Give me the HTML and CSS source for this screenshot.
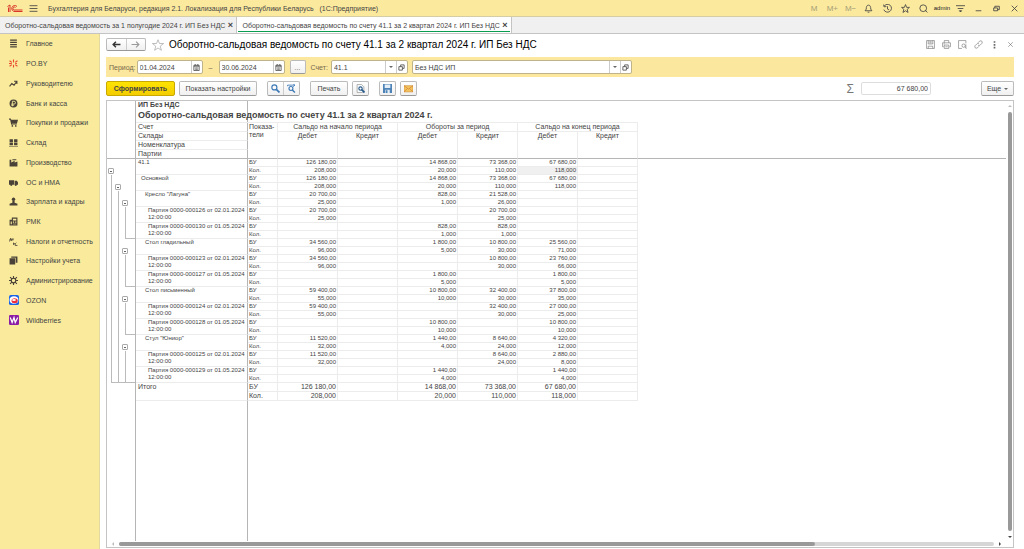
FILE: index.html
```html
<!DOCTYPE html>
<html lang="ru">
<head>
    <meta charset="UTF-8">
    <meta name="viewport" content="width=device-width, initial-scale=1.0">
    <title>Оборотно-сальдовая ведомость по счету 41.1</title>
    <link rel="stylesheet" href="styles.css">
</head>
<body>
    <!-- Title bar -->
    <header class="topbar">
        <svg class="logo" viewBox="0 0 32 18"><g fill="none" stroke="#d9352b" stroke-width="2"><path d="M1 5l5-3v14M3 7v9"/><path d="M20 5a6 6 0 1 0-4 10h15"/><path d="M17 7a3 3 0 1 0-1 5h15"/></g></svg>
        <button class="icon-btn menu-btn" aria-label="Меню"><svg viewBox="0 0 16 16"><path d="M1 3h14M1 8h14M1 13h14"/></svg></button>
        <span class="app-name">Бухгалтерия для Беларуси, редакция 2.1. Локализация для Республики Беларусь &nbsp; (1С:Предприятие)</span>
        <div class="top-tools">
            <button class="mem">M</button>
            <button class="mem">M+</button>
            <button class="mem">M−</button>
            <button aria-label="Уведомления"><svg viewBox="0 0 16 16"><path d="M2 12h12l-2-3c0-4-1-7-4-7s-4 3-4 7zM6.500 14.500h3"/></svg></button>
            <button aria-label="История"><svg viewBox="0 0 16 16"><path d="M2 4a7 7 0 1 1-.5 6M1 1l1 4 4-.5M8 4v5l3 1.500"/></svg></button>
            <button aria-label="Избранное"><svg viewBox="0 0 16 16"><path d="M8 1l2 5h5l-4 3.500 1.500 5.500L8 12l-4.500 3L5 9.500 1 6h5z"/></svg></button>
            <button aria-label="Поиск"><svg viewBox="0 0 16 16"><circle cx="7.500" cy="7.500" r="6"/><path d="M11 11l4 4"/></svg></button>
            <button class="user">admin</button>
            <button aria-label="Настройки"><svg viewBox="0 0 16 16"><path d="M0 3h16M3 8h10"/><path class="solid" d="M6 12h4l-2 2z"/></svg></button>
            <button aria-label="Свернуть"><svg viewBox="0 0 16 16"><path d="M3 12h10"/></svg></button>
            <button aria-label="Восстановить"><svg viewBox="0 0 16 16"><path d="M3 7h7v5H3zM5 7V4h8v6h-3"/></svg></button>
            <button aria-label="Закрыть"><svg viewBox="0 0 16 16"><path d="M3 3l10 10M13 3L3 13"/></svg></button>
        </div>
    </header>

    <!-- Open windows -->
    <nav class="tabs">
        <div class="tab"><a href="#">Оборотно-сальдовая ведомость за 1 полугодие 2024 г. ИП Без НДС</a><button aria-label="Закрыть вкладку">×</button></div>
        <div class="tab active"><a href="#">Оборотно-сальдовая ведомость по счету 41.1 за 2 квартал 2024 г. ИП Без НДС</a><button aria-label="Закрыть вкладку">×</button></div>
    </nav>

    <div class="workspace">
        <nav class="sidebar">
            <div class="menu">
                <a href="#"><svg viewBox="0 0 16 16"><path d="M2 2h12M2 6h12M2 10h12M2 14h12" stroke="#4a4238" stroke-width="2"/></svg>Главное</a>
                <a href="#"><svg viewBox="0 0 16 16"><path d="M8 1v5M8 10v5M1 3l4 3M1 13l4-3M15 3l-4 3M15 13l-4-3M0 8h5M11 8h3" stroke="#ea4a30" stroke-width="2"/></svg>PO.BY</a>
                <a href="#"><svg viewBox="0 0 16 16"><path d="M1 13l4-5 4 3 5-7M9 4h5v5" fill="none" stroke="#4a4238" stroke-width="2"/></svg>Руководителю</a>
                <a href="#"><svg viewBox="0 0 16 16"><circle cx="8" cy="8" r="7"/><path d="M6 13V4h3a2 2 0 0 1 0 5H4M4 11h5" fill="none" stroke="#f9eb9b" stroke-width="1.500"/></svg>Банк и касса</a>
                <a href="#"><svg viewBox="0 0 16 16"><path d="M0 1h3l1 2h12l-2 7H5l1 1h8v1H4L2 3H0z"/><circle cx="6" cy="14" r="1.500"/><circle cx="12" cy="14" r="1.500"/></svg>Покупки и продажи</a>
                <a href="#"><svg viewBox="0 0 16 16"><path d="M1 2h6v5H1zM9 2h6v5H9zM1 8h6v5H1zM9 8h6v5H9zM0 14h16v1H0z"/></svg>Склад</a>
                <a href="#"><svg viewBox="0 0 16 16"><path d="M1 15V3h3v5l6-3v3l5-2v9zM6 2h7v2H6z"/></svg>Производство</a>
                <a href="#"><svg viewBox="0 0 16 16"><path d="M0 4h9v8H0zM10 5h4l2 3v4h-6z"/><circle cx="4" cy="12" r="2"/><circle cx="12" cy="12" r="2"/></svg>ОС и НМА</a>
                <a href="#"><svg viewBox="0 0 16 16"><circle cx="8" cy="4" r="3"/><path d="M6 6h4v4l5 2v3H1v-3l5-2z"/></svg>Зарплата и кадры</a>
                <a href="#"><svg viewBox="0 0 16 16"><path d="M1 5h4V1h10v14H1zM7 3v3h6V3zM3 8v5h2V8zM7 8v2h2V8zM11 8v2h2V8zM7 12v1h6v-1z" fill-rule="evenodd"/></svg>РМК</a>
                <a href="#"><svg viewBox="0 0 16 16"><path d="M1 8l2-6 2 5M1 5h7M7 2v3M8 10v4M8 12h3l2-2M11 12v3h4" fill="none" stroke="#4a4238" stroke-width="1.500"/></svg>Налоги и отчетность</a>
                <a href="#"><svg viewBox="0 0 16 16"><path d="M1 4h10v11H1zM4 1h11v11h-3V3H4z"/></svg>Настройки учета</a>
                <a href="#"><svg viewBox="0 0 16 16"><circle cx="8" cy="8" r="4" fill="none" stroke="#4a4238" stroke-width="2"/><path d="M8 0v4M8 12v4M0 8h4M12 8h4M2 2l3 3M11 11l3 3M14 2l-3 3M5 11l-3 3" stroke="#4a4238" stroke-width="2"/></svg>Администрирование</a>
                <a href="#"><svg class="brand" viewBox="0 0 16 16"><rect width="16" height="16" rx="3" fill="#1762e8"/><ellipse cx="8" cy="8" rx="7" ry="6" fill="#fff"/><ellipse cx="9" cy="9" rx="5" ry="4" fill="#ec2e3c"/><ellipse cx="8" cy="8" rx="3" ry="1.500" fill="#fff"/></svg>OZON</a>
                <a href="#"><svg class="brand" viewBox="0 0 16 16"><rect width="16" height="16" rx="2" fill="#8a1ca5"/><path d="M2 4l3 8 3-8 2 8 4-8" fill="none" stroke="#fff" stroke-width="2"/></svg>Wildberries</a>
            </div>
        </nav>

        <main class="page">
            <div class="page-head">
                <div class="btn-pair nav-pair">
                    <button aria-label="Назад"><svg viewBox="0 0 16 16"><path d="M15 8H3M7 3L2 8l5 5" fill="none" stroke="#333" stroke-width="2.500"/></svg></button>
                    <button aria-label="Вперед"><svg viewBox="0 0 16 16"><path d="M1 8h12M9 3l5 5-5 5" fill="none" stroke="#999" stroke-width="2"/></svg></button>
                </div>
                <button class="star" aria-label="В избранное"><svg viewBox="0 0 16 16"><path d="M8 1l2 5h5.500l-4.500 3.500 1.500 5.500L8 12l-4.500 3L5 9.500.5 6H6z" fill="none" stroke="#aaa"/></svg></button>
                <h1>Оборотно-сальдовая ведомость по счету 41.1 за 2 квартал 2024 г. ИП Без НДС</h1>
                <div class="head-tools">
                    <button aria-label="Сохранить"><svg viewBox="0 0 16 16"><path d="M1 1h14v14H1zM4 1v6h8V1M4 15v-4h8v4M6 3h4M6 5h4"/></svg></button>
                    <button aria-label="Печать"><svg viewBox="0 0 16 16"><path d="M4 5V1h8v4M3 12H1V5h14v7h-2M4 9h8v6H4zM6 12h4M3 7h2"/></svg></button>
                    <button aria-label="Просмотр"><svg viewBox="0 0 16 16"><path d="M7 15H1V1h13v5M15 15l-2-2M14 8v7"/><circle cx="10" cy="10" r="3"/></svg></button>
                    <button aria-label="Ссылка"><svg viewBox="0 0 16 16"><path d="M7 5l3-3c3-2 6 1 4 4l-3 3c-1 1-3 1-4 0M9 11l-3 3c-3 2-6-1-4-4l3-3c1-1 3-1 4 0"/></svg></button>
                    <button aria-label="Еще действия"><svg viewBox="0 0 16 16"><path d="M8 2v3M8 7v3M8 12v3" stroke-width="3"/></svg></button>
                    <button aria-label="Закрыть"><svg viewBox="0 0 16 16"><path d="M4 4l8 8M12 4l-8 8"/></svg></button>
                </div>
            </div>

            <form class="filter">
                <label for="date-from">Период:</label>
                <div class="field date"><input id="date-from" type="text" value="01.04.2024"><button type="button" aria-label="Календарь"><svg viewBox="0 0 16 16"><path d="M2 3h12v12H2zM2 5h12M5 0v3M11 0v3M5 9h6M5 12h6"/></svg></button></div>
                <label class="dash" for="date-to">–</label>
                <div class="field date"><input id="date-to" type="text" value="30.06.2024"><button type="button" aria-label="Календарь"><svg viewBox="0 0 16 16"><path d="M2 3h12v12H2zM2 5h12M5 0v3M11 0v3M5 9h6M5 12h6"/></svg></button></div>
                <button type="button" class="btn dots">...</button>
                <label for="account">Счет:</label>
                <div class="field account"><input id="account" type="text" value="41.1"><button type="button" aria-label="Выбрать"><i class="caret"></i></button><button type="button" aria-label="Открыть"><svg viewBox="0 0 16 16"><path d="M2 6h8v8H2zM6 6V2h8v8h-4"/></svg></button></div>
                <div class="field org"><input type="text" aria-label="Организация" value="Без НДС ИП"><button type="button" aria-label="Выбрать"><i class="caret"></i></button><button type="button" aria-label="Открыть"><svg viewBox="0 0 16 16"><path d="M2 6h8v8H2zM6 6V2h8v8h-4"/></svg></button></div>
            </form>

            <div class="toolbar">
                <button class="btn primary">Сформировать</button>
                <button class="btn settings">Показать настройки</button>
                <div class="btn-pair search-pair">
                    <button aria-label="Найти"><svg viewBox="0 0 16 16"><circle cx="6" cy="6" r="4.500" fill="none" stroke="#3b78b5" stroke-width="2"/><path d="M9.500 9.500L15 15" stroke="#3b78b5" stroke-width="3"/></svg></button>
                    <button aria-label="Искать дальше"><svg viewBox="0 0 16 16"><path d="M1 4V2h13M11 0l3 2-3 3" fill="none" stroke="#3b78b5" stroke-width="1.500"/><circle cx="7" cy="8" r="3.500" fill="none" stroke="#3b78b5" stroke-width="2"/><path d="M9.500 10.500L14 15" stroke="#3b78b5" stroke-width="2.500"/></svg></button>
                </div>
                <button class="btn print">Печать</button>
                <button class="btn icon" aria-label="Предпросмотр"><svg viewBox="0 0 16 16"><path d="M2 1h8l4 4v10H2z" fill="#fff" stroke="#777"/><circle cx="8" cy="8" r="3" fill="none" stroke="#265a8c" stroke-width="2"/><path d="M10 10l5 5" stroke="#265a8c" stroke-width="3"/></svg></button>
                <button class="btn icon save" aria-label="Сохранить"><svg viewBox="0 0 16 16"><path d="M0 0h16v16H0z" fill="#4e83b8"/><path d="M3 1h10v6H3zM4 10h8v6H4z" fill="#e4eef7"/><path d="M5 11h3v5H5z" fill="#4e83b8"/></svg></button>
                <button class="btn icon" aria-label="Отправить"><svg viewBox="0 0 16 16"><path d="M0 3h16v11H0z" fill="#f3c560" stroke="#cb8427"/><path d="M0 3l8 6 8-6M0 14l6-6M16 14l-6-6" fill="none" stroke="#cb6f27"/></svg></button>
                <label class="sigma" for="sum">Σ</label>
                <input id="sum" class="sum" type="text" value="67 680,00">
                <button class="btn more">Еще <i class="caret"></i></button>
            </div>

            <!-- Report -->
            <section class="sheet">
                <div class="sheet-view">
                    <div class="cells">
                        <table class="report">
                            <colgroup><col class="c-tree"><col class="c-name"><col class="c-kind"><col class="c-num"><col class="c-num"><col class="c-num"><col class="c-num"><col class="c-num"><col class="c-num"><col></colgroup>
                            <thead>
                                <tr class="org-row"><td class="tree"></td><td class="name">ИП Без НДС</td><td colspan="8"></td></tr>
                                <tr class="title-row"><td class="tree"></td><td class="name">Оборотно-сальдовая ведомость по счету 41.1 за 2 квартал 2024 г.</td><td colspan="8"></td></tr>
                                <tr class="top"><td class="tree" rowspan="4"></td><th class="name">Счет</th><th class="kind" rowspan="4">Показа-<br>тели</th><th colspan="2">Сальдо на начало периода</th><th colspan="2">Обороты за период</th><th colspan="2">Сальдо на конец периода</th><td class="rest" rowspan="4"></td></tr>
                                <tr><th class="name">Склады</th><th rowspan="3">Дебет</th><th rowspan="3">Кредит</th><th rowspan="3">Дебет</th><th rowspan="3">Кредит</th><th rowspan="3">Дебет</th><th rowspan="3">Кредит</th></tr>
                                <tr><th class="name">Номенклатура</th></tr>
                                <tr><th class="name last">Партии</th></tr>
                            </thead>
                            <tbody>
                                <tr>
                                    <td class="tree" rowspan="28">
                                        <div class="groups">
                                            <button class="fold l1 r2" aria-label="Свернуть"></button><i class="line l1 all"></i>
                                            <button class="fold l2 r4" aria-label="Свернуть"></button><i class="line l2 main"></i>
                                            <button class="fold l3 r6" aria-label="Свернуть"></button><i class="line l3 g1"></i>
                                            <button class="fold l3 r12" aria-label="Свернуть"></button><i class="line l3 g2"></i>
                                            <button class="fold l3 r18" aria-label="Свернуть"></button><i class="line l3 g3"></i>
                                            <button class="fold l3 r24" aria-label="Свернуть"></button><i class="line l3 g4"></i>
                                        </div>
                                    </td>
                                    <td class="name" rowspan="2">41.1</td><td>БУ</td><td>126 180,00</td><td></td><td>14 868,00</td><td>73 368,00</td><td>67 680,00</td><td></td></tr>
                                <tr><td>Кол.</td><td>208,000</td><td></td><td>20,000</td><td>110,000</td><td class="selected">118,000</td><td></td></tr>
                                <tr><td class="name in1" rowspan="2">Основной</td><td>БУ</td><td>126 180,00</td><td></td><td>14 868,00</td><td>73 368,00</td><td>67 680,00</td><td></td></tr>
                                <tr><td>Кол.</td><td>208,000</td><td></td><td>20,000</td><td>110,000</td><td>118,000</td><td></td></tr>
                                <tr><td class="name in2" rowspan="2">Кресло "Лагуна"</td><td>БУ</td><td>20 700,00</td><td></td><td>828,00</td><td>21 528,00</td><td></td><td></td></tr>
                                <tr><td>Кол.</td><td>25,000</td><td></td><td>1,000</td><td>26,000</td><td></td><td></td></tr>
                                <tr><td class="name in3" rowspan="2">Партия 0000-000126 от 02.01.2024<br>12:00:00</td><td>БУ</td><td>20 700,00</td><td></td><td></td><td>20 700,00</td><td></td><td></td></tr>
                                <tr><td>Кол.</td><td>25,000</td><td></td><td></td><td>25,000</td><td></td><td></td></tr>
                                <tr><td class="name in3" rowspan="2">Партия 0000-000130 от 01.05.2024<br>12:00:00</td><td>БУ</td><td></td><td></td><td>828,00</td><td>828,00</td><td></td><td></td></tr>
                                <tr><td>Кол.</td><td></td><td></td><td>1,000</td><td>1,000</td><td></td><td></td></tr>
                                <tr><td class="name in2" rowspan="2">Стол гладильный</td><td>БУ</td><td>34 560,00</td><td></td><td>1 800,00</td><td>10 800,00</td><td>25 560,00</td><td></td></tr>
                                <tr><td>Кол.</td><td>96,000</td><td></td><td>5,000</td><td>30,000</td><td>71,000</td><td></td></tr>
                                <tr><td class="name in3" rowspan="2">Партия 0000-000123 от 02.01.2024<br>12:00:00</td><td>БУ</td><td>34 560,00</td><td></td><td></td><td>10 800,00</td><td>23 760,00</td><td></td></tr>
                                <tr><td>Кол.</td><td>96,000</td><td></td><td></td><td>30,000</td><td>66,000</td><td></td></tr>
                                <tr><td class="name in3" rowspan="2">Партия 0000-000127 от 01.05.2024<br>12:00:00</td><td>БУ</td><td></td><td></td><td>1 800,00</td><td></td><td>1 800,00</td><td></td></tr>
                                <tr><td>Кол.</td><td></td><td></td><td>5,000</td><td></td><td>5,000</td><td></td></tr>
                                <tr><td class="name in2" rowspan="2">Стол письменный</td><td>БУ</td><td>59 400,00</td><td></td><td>10 800,00</td><td>32 400,00</td><td>37 800,00</td><td></td></tr>
                                <tr><td>Кол.</td><td>55,000</td><td></td><td>10,000</td><td>30,000</td><td>35,000</td><td></td></tr>
                                <tr><td class="name in3" rowspan="2">Партия 0000-000124 от 02.01.2024<br>12:00:00</td><td>БУ</td><td>59 400,00</td><td></td><td></td><td>32 400,00</td><td>27 000,00</td><td></td></tr>
                                <tr><td>Кол.</td><td>55,000</td><td></td><td></td><td>30,000</td><td>25,000</td><td></td></tr>
                                <tr><td class="name in3" rowspan="2">Партия 0000-000128 от 01.05.2024<br>12:00:00</td><td>БУ</td><td></td><td></td><td>10 800,00</td><td></td><td>10 800,00</td><td></td></tr>
                                <tr><td>Кол.</td><td></td><td></td><td>10,000</td><td></td><td>10,000</td><td></td></tr>
                                <tr><td class="name in2" rowspan="2">Стул "Юниор"</td><td>БУ</td><td>11 520,00</td><td></td><td>1 440,00</td><td>8 640,00</td><td>4 320,00</td><td></td></tr>
                                <tr><td>Кол.</td><td>32,000</td><td></td><td>4,000</td><td>24,000</td><td>12,000</td><td></td></tr>
                                <tr><td class="name in3" rowspan="2">Партия 0000-000125 от 02.01.2024<br>12:00:00</td><td>БУ</td><td>11 520,00</td><td></td><td></td><td>8 640,00</td><td>2 880,00</td><td></td></tr>
                                <tr><td>Кол.</td><td>32,000</td><td></td><td></td><td>24,000</td><td>8,000</td><td></td></tr>
                                <tr><td class="name in3" rowspan="2">Партия 0000-000129 от 01.05.2024<br>12:00:00</td><td>БУ</td><td></td><td></td><td>1 440,00</td><td></td><td>1 440,00</td><td></td></tr>
                                <tr><td>Кол.</td><td></td><td></td><td>4,000</td><td></td><td>4,000</td><td></td></tr>
                            </tbody>
                            <tfoot>
                                <tr><td class="tree" rowspan="2"></td><td class="name" rowspan="2">Итого</td><td>БУ</td><td>126 180,00</td><td></td><td>14 868,00</td><td>73 368,00</td><td>67 680,00</td><td></td></tr>
                                <tr><td>Кол.</td><td>208,000</td><td></td><td>20,000</td><td>110,000</td><td>118,000</td><td></td></tr>
                            </tfoot>
                        </table>
                        <div class="empty"><div class="c-tree"></div><div class="c-name"></div></div>
                    </div>
                    <div class="vscroll"><i class="arrow up"></i><div class="thumb"></div><i class="arrow down"></i></div>
                </div>
                <div class="hscroll"><i class="arrow left"></i><div class="track"><div class="thumb"></div></div><i class="arrow right"></i></div>
            </section>
        </main>
    </div>
</body>
</html>
```
FILE: styles.css
```css
* {
    box-sizing: border-box;
}

body {
    margin: 0;
    height: 100vh;
    display: flex;
    flex-direction: column;
    font-family: "Liberation Sans", Arial, sans-serif;
    font-size: 7px;
    color: #444;
    background: #fff;
    overflow: hidden;
}

button, input {
    font: inherit;
    color: inherit;
    margin: 0;
    padding: 0;
}

button {
    display: flex;
    align-items: center;
    justify-content: center;
    border: none;
    background: none;
    cursor: pointer;
}

a {
    color: inherit;
    text-decoration: none;
}

svg {
    display: block;
    flex: none;
    width: 9px;
    height: 9px;
}

/* Title bar */
.topbar {
    display: flex;
    align-items: center;
    height: 17px;
    padding-left: 7px;
    background: #fbe99e;
    border-bottom: 1px solid #d5cda5;
}

.logo {
    width: 16px;
    height: 9px;
}

.menu-btn {
    margin: 0 10px 0 6px;
}

.topbar button svg {
    fill: none;
    stroke: #444;
    stroke-width: 1.5;
}

.topbar .solid {
    fill: #444;
}

.top-tools {
    display: flex;
    width: 219px;
    margin-left: auto;
}

.top-tools button {
    flex: 1 1 0;
    min-width: 0;
}

.top-tools .mem {
    font-size: 8px;
    color: #a79f78;
}

.top-tools .user {
    font-size: 6px;
    color: #222;
}

/* Tabs */
.tabs {
    display: flex;
    height: 17px;
    background: #f0f0f0;
    border-bottom: 1px solid #c4c4c4;
}

.tab {
    display: flex;
    align-items: center;
    gap: 1px;
    padding: 0 2px 0 5px;
    border-right: 1px solid #c4c4c4;
    white-space: nowrap;
}

.tab button {
    width: 8px;
    font-size: 9px;
    font-weight: bold;
}

.tab.active {
    background-color: #fff;
    background-image: linear-gradient(#0a9c50, #0a9c50);
    background-position: 1px 14px;
    background-size: calc(100% - 2px) 1px;
    background-repeat: no-repeat;
}

.workspace {
    flex: 1;
    min-height: 0;
    display: flex;
}

/* Sidebar */
.sidebar {
    width: 100px;
    background: #f9eb9b;
    border-right: 1px solid #e2d8a0;
}

.menu {
    display: flex;
    flex-direction: column;
    height: 296px;
}

.sidebar a {
    flex: 1;
    display: flex;
    align-items: center;
    gap: 8px;
    padding-left: 9px;
    white-space: nowrap;
}

.sidebar svg {
    fill: #4a4238;
}

.sidebar .brand {
    width: 10px;
    height: 10px;
    margin: 0 -1px 0 0;
}

/* Page */
.page {
    flex: 1;
    min-width: 0;
    display: flex;
    flex-direction: column;
    padding: 3px 10px 0 6px;
}

.page-head {
    display: flex;
    align-items: center;
    height: 15px;
}

.btn, .btn-pair {
    height: 15px;
    border: 1px solid #bbb;
    border-bottom-color: #999;
    border-radius: 2px;
    background: linear-gradient(#fff, #f0f0f0);
}

.btn-pair {
    display: flex;
}

.btn-pair button {
    flex: 1;
}

.btn-pair button + button {
    border-left: 1px solid #ccc;
}

.nav-pair {
    width: 40px;
    height: 13px;
}

.star {
    margin: 0 5px 0 6px;
}

.star svg {
    width: 12px;
    height: 12px;
}

h1 {
    margin: 0;
    font-size: 10px;
    font-weight: normal;
    color: #000;
    white-space: nowrap;
}

.head-tools {
    display: flex;
    margin: 0 -4px 0 auto;
}

.head-tools button {
    width: 16px;
}

.head-tools svg {
    fill: none;
    stroke: #666;
}

/* Filter */
.filter {
    display: flex;
    align-items: center;
    height: 20px;
    margin-top: 5px;
    padding-left: 3px;
    background: #fce79f;
    color: #75694a;
}

.field {
    display: flex;
    height: 14px;
    margin-left: 1px;
    border: 1px solid #bfb489;
    border-radius: 2px;
    background: #fff;
    color: #444;
}

.field input {
    flex: 1;
    min-width: 0;
    padding-left: 2px;
    border: none;
    background: none;
}

.field button {
    width: 11px;
    border-left: 1px solid #ccc;
}

.field svg {
    width: 7px;
    height: 7px;
    fill: none;
    stroke: #555;
    stroke-width: 2;
}

.date {
    width: 66px;
}

.dash {
    width: 12px;
    margin-left: 2px;
    text-align: center;
}

.dash + .field {
    margin-left: 2px;
}

.dots {
    width: 16px;
    height: 14px;
    margin: 0 5px;
}

.account {
    width: 77px;
    margin-left: 3px;
}

.org {
    width: 220px;
    margin-left: 4px;
}

.caret {
    border: 2px solid transparent;
    border-top-color: #666;
    border-bottom: none;
}

/* Toolbar */
.toolbar {
    display: flex;
    align-items: center;
    gap: 4px;
    height: 15px;
    margin: 4px 0;
}

.primary {
    width: 69px;
    background: linear-gradient(#ffe300, #f3cd00);
    border-color: #c9a800;
    font-weight: bold;
}

.settings {
    width: 78px;
}

.search-pair {
    width: 33px;
    margin: 0 6px;
}

.print {
    width: 38px;
}

.icon {
    width: 17px;
}

.save {
    margin-left: 6px;
}

.sigma {
    margin-left: auto;
    font-size: 12px;
    color: #777;
}

.sum {
    width: 70px;
    height: 13px;
    margin: 0 46px 0 3px;
    padding-right: 2px;
    border: 1px solid #ddd;
    border-radius: 2px;
    text-align: right;
}

.more {
    width: 33px;
    gap: 3px;
}

/* Spreadsheet */
.sheet {
    flex: 1;
    min-height: 0;
    display: flex;
    flex-direction: column;
    margin-bottom: 1px;
    border: 1px solid #c4c4c4;
}

.sheet-view {
    flex: 1;
    min-height: 0;
    display: flex;
}

.cells {
    flex: 1;
    min-width: 0;
    display: flex;
    flex-direction: column;
}

.report {
    width: 100%;
    table-layout: fixed;
    border-collapse: separate;
    border-spacing: 0;
    font-size: 6px;
    line-height: 7px;
}

.c-tree {
    width: 29px;
}

.c-name {
    width: 112px;
}

.c-kind {
    width: 30px;
}

.c-num {
    width: 60px;
}

/* Frozen columns run on below the last row */
.empty {
    flex: 1;
    display: flex;
}

.empty div {
    border-right: 1px solid #b5b5b5;
}

.report td, .report th {
    padding: 0 1px;
    font-weight: normal;
    text-align: right;
    vertical-align: top;
    white-space: nowrap;
    border: 0 solid #ececec;
}

.report thead, .report tfoot {
    font-size: 7px;
    line-height: 8px;
}

.report thead tr, .report tfoot tr {
    height: 9px;
}

.report tbody tr {
    height: 8px;
}

.report tbody td, .report tfoot td, .report th {
    border-width: 0 1px 1px 0;
}

.report th {
    text-align: center;
}

.report .top th {
    box-shadow: 0 -1px #ececec;
}

.report .kind, .report tbody td:nth-last-child(7), .report tfoot td:nth-last-child(7) {
    text-align: left;
}

.report .name {
    padding-left: 2px;
    text-align: left;
    border-right: 1px solid #b5b5b5;
}

.report .tree {
    padding: 0;
    border-width: 0 1px 0 0;
    border-color: #b5b5b5;
}

.report .in1 {
    padding-left: 5px;
}

.report .in2 {
    padding-left: 9px;
}

.report .in3 {
    padding-left: 12px;
}

.report .org-row td, .report .title-row td {
    font-weight: bold;
}

.report .title-row {
    height: 13px;
    font-size: 9px;
    line-height: 11px;
}

/* Frozen header edge */
.report thead [rowspan], .report thead .last {
    border-bottom: 1px solid #b5b5b5;
}

.report .selected {
    background: #f0f0f0;
}

/* Row groups */
.groups {
    display: grid;
    grid-template-rows: repeat(28, 8px);
    grid-template-columns: 7px 7px 7px 6px;
    padding-left: 1px;
}

.fold {
    width: 6px;
    height: 6px;
    align-self: center;
    border: 1px solid #aaa;
    border-radius: 1px;
    background: linear-gradient(#666, #666) center / 2px 1px no-repeat #fff;
}

.line {
    margin-left: 3px;
    border-left: 1px solid #bbb;
    border-bottom: 1px solid #bbb;
}

.l1 { grid-column: 1; }
.l2 { grid-column: 2; }
.l3 { grid-column: 3; }
.line.l1 { grid-column: 1 / 5; }
.line.l2 { grid-column: 2 / 5; }
.line.l3 { grid-column: 3 / 5; }
.r2 { grid-row: 2; }
.r4 { grid-row: 4; }
.r6 { grid-row: 6; }
.r12 { grid-row: 12; }
.r18 { grid-row: 18; }
.r24 { grid-row: 24; }
.all { grid-row: 3 / 29; }
.main { grid-row: 5 / 29; }
.g1 { grid-row: 7 / 11; }
.g2 { grid-row: 13 / 17; }
.g3 { grid-row: 19 / 23; }
.g4 { grid-row: 25 / 29; }

/* Scroll bars */
.vscroll {
    width: 7px;
    display: flex;
    flex-direction: column;
    align-items: center;
    gap: 5px;
    padding: 4px 0 3px;
}

.vscroll .thumb {
    flex: 1;
    width: 4px;
    border-radius: 2px;
    background: #999;
}

.hscroll {
    height: 6px;
    display: flex;
    align-items: center;
    gap: 5px;
    padding: 0 12px 0 5px;
}

.track {
    flex: 1;
    height: 4px;
    border-radius: 2px;
    background: #d6d6d6;
}

.track .thumb {
    width: 79.5%;
    height: 4px;
    border-radius: 2px;
    background: #999;
}

.arrow {
    border: 2px solid transparent;
}

.up {
    border-top: none;
    border-bottom-color: #bbb;
}

.down {
    border-bottom: none;
    border-top-color: #444;
}

.left {
    border-left: none;
    border-right-color: #bbb;
}

.right {
    border-right: none;
    border-left-color: #444;
}
```
